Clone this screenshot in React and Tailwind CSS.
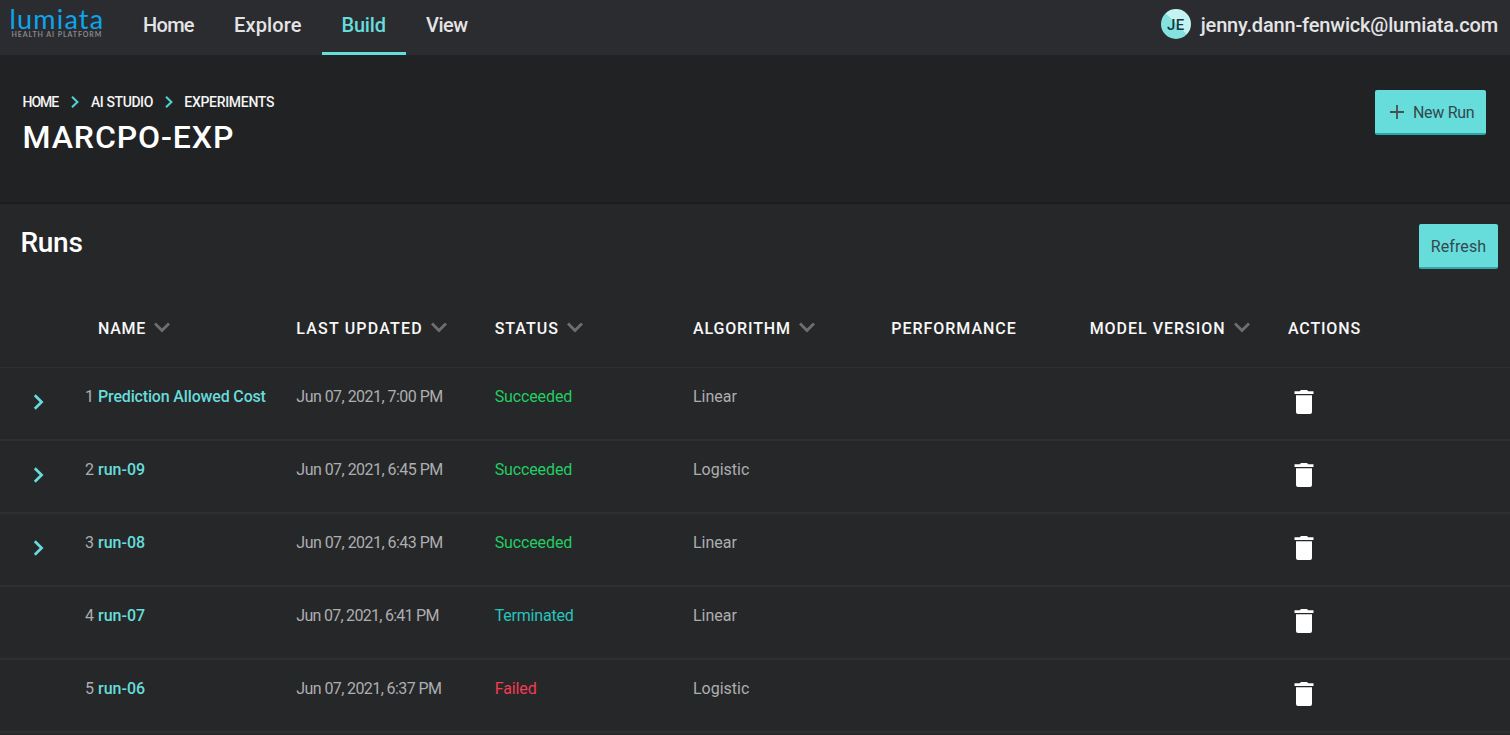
const COLUMNS = [
  { label: "NAME", spacing: "tracking-[0.7px]", sortable: true },
  { label: "LAST UPDATED", spacing: "tracking-[1.18px]", sortable: true },
  { label: "STATUS", spacing: "tracking-[1px]", sortable: true },
  { label: "ALGORITHM", spacing: "tracking-[0.85px]", sortable: true },
  { label: "PERFORMANCE", spacing: "tracking-[0.96px]", sortable: false },
  { label: "MODEL VERSION", spacing: "tracking-[0.98px]", sortable: true },
  { label: "ACTIONS", spacing: "tracking-[0.85px]", sortable: false },
];

const STATUS_STYLES = {
  Succeeded: "text-[#21ce63] tracking-[-0.12px]",
  Terminated: "text-[#25c4be] tracking-[-0.2px]",
  Failed: "text-[#f23c50] tracking-[-0.1px]",
};

const RUNS = [
  { id: 1, name: "Prediction Allowed Cost", updated: "Jun 07, 2021, 7:00 PM", status: "Succeeded", algorithm: "Linear", expandable: true },
  { id: 2, name: "run-09", updated: "Jun 07, 2021, 6:45 PM", status: "Succeeded", algorithm: "Logistic", expandable: true },
  { id: 3, name: "run-08", updated: "Jun 07, 2021, 6:43 PM", status: "Succeeded", algorithm: "Linear", expandable: true },
  { id: 4, name: "run-07", updated: "Jun 07, 2021, 6:41 PM", status: "Terminated", algorithm: "Linear", expandable: false },
  { id: 5, name: "run-06", updated: "Jun 07, 2021, 6:37 PM", status: "Failed", algorithm: "Logistic", expandable: false },
];

const DATE_SPACING = {
  4: "tracking-[-0.72px]",
  5: "tracking-[-0.6px]",
};

const GRID = "grid grid-cols-[98px_repeat(6,198.33px)_1fr]";

function SortIcon() {
  return (
    <svg className="mb-1 ml-[8.3px] h-[11px] w-4 shrink-0" viewBox="0 0 16 11" fill="none" stroke="#6d6e6f" strokeWidth="2.8">
      <path d="M1 1.4 8 8.4 15 1.4" />
    </svg>
  );
}

function ExpandIcon() {
  return (
    <svg className="h-4 w-[11px]" viewBox="0 0 11 16" fill="none" stroke="#66dcdb" strokeWidth="2.7">
      <path d="M1.8 1.2 8.6 8 1.8 14.8" />
    </svg>
  );
}

function CrumbIcon() {
  return (
    <svg className="h-3 w-2 shrink-0" viewBox="0 0 8 12" fill="none" stroke="#4fd0d0" strokeWidth="2.1">
      <path d="M1 .8 6.4 6 1 11.2" />
    </svg>
  );
}

function TrashIcon() {
  return (
    <svg className="h-6 w-5" viewBox="0 0 20 24" fill="#fff">
      <path d="M.5 1.3h5.3L7 0h6l1.2 1.3h5.3V4H.5z" />
      <path d="M2 5.3h16V22a2 2 0 0 1-2 2H4a2 2 0 0 1-2-2z" />
    </svg>
  );
}

function Header() {
  return (
    <header className="flex h-[55px] justify-between bg-[#2b2c30] pr-3">
      <div className="flex">
        <div className="flex w-[123px] flex-col pl-[9.5px] pt-[5px]">
          <span className="h-[26px] whitespace-nowrap font-['Lato',sans-serif] text-[27px] leading-[27px] tracking-[1.2px] text-[#0ea5ee]">lumiata</span>
          <span className="whitespace-nowrap pl-[2px] font-['Lato',sans-serif] text-[7px] font-bold leading-[7px] tracking-[0.92px] text-[#86878a]">HEALTH AI PLATFORM</span>
        </div>
        <nav className="flex text-xl font-medium leading-[50px] text-[#e4e4e6]">
          <a className="w-[91px] pl-5 tracking-[-0.7px]">Home</a>
          <a className="w-[108px] pl-5 tracking-[0.14px]">Explore</a>
          <a className="w-[84px] border-b-[3px] border-[#66dcdb] pl-[19.5px] tracking-[-0.2px] text-[#66dcdb]">Build</a>
          <a className="pl-5 tracking-[-0.5px]">View</a>
        </nav>
      </div>
      <div className="flex h-[49px] items-center gap-[10px]">
        <span className="mb-px flex size-[30px] items-center justify-center rounded-full bg-[linear-gradient(45deg,#84e2e0_50%,#c3f4f1_50%)] pt-0.5 text-[15px] font-medium tracking-[0.4px] text-[#17383c]">JE</span>
        <span className="pt-px text-xl font-medium tracking-[-0.17px] text-[#e4e4e6]">jenny.dann-fenwick@lumiata.com</span>
      </div>
    </header>
  );
}

function Hero() {
  return (
    <section className="flex h-[149px] justify-between border-b-2 border-[#1b1c1e] bg-[#212224] pl-[22.5px] pr-6">
      <div className="pt-[37px]">
        <div className="flex h-5 items-center text-sm font-medium text-[#f4f4f4]">
          <span className="w-[48.5px] tracking-[-1px]">HOME</span>
          <CrumbIcon />
          <span className="w-[74px] whitespace-nowrap pl-3 tracking-[-0.42px]">AI STUDIO</span>
          <span className="w-3" />
          <CrumbIcon />
          <span className="pl-[11.3px] tracking-[-0.3px]">EXPERIMENTS</span>
        </div>
        <h1 className="pt-[3px] text-[32px] font-medium leading-[44px] tracking-[0.92px] text-white">MARCPO-EXP</h1>
      </div>
      <button className="mt-[35px] flex h-[45px] w-[111px] items-center rounded-[2px] border-b-2 border-[#24a8a8] bg-[#66dcdb] pl-[15px] text-base tracking-[-0.3px] text-[#33494f]">
        <svg className="mr-[9px] h-[14px] w-[14px]" viewBox="0 0 14 14" stroke="#4c4d55" strokeWidth="1.8">
          <path d="M7 0v14M0 7h14" />
        </svg>
        <span className="whitespace-nowrap pt-0.5">New Run</span>
      </button>
    </section>
  );
}

function RunRow({ run }) {
  return (
    <div className={`${GRID} h-[73px] border-b-2 border-[#2e2f32] pt-[18px] text-base leading-[22px] text-[#adaeb0]`}>
      <div className="flex justify-between pl-[33px] pr-1">
        <span className="pt-2">{run.expandable && <ExpandIcon />}</span>
        <span>{run.id}</span>
      </div>
      <a className={`whitespace-nowrap font-medium text-[#66dcdb] ${run.id === 1 ? "tracking-[-0.16px]" : ""}`}>{run.name}</a>
      <span className={`whitespace-nowrap ${DATE_SPACING[run.id] ?? "tracking-[-0.53px]"}`}>{run.updated}</span>
      <span className={STATUS_STYLES[run.status]}>{run.status}</span>
      <span>{run.algorithm}</span>
      <span />
      <span />
      <button className="flex items-start pl-1.5 pt-1">
        <TrashIcon />
      </button>
    </div>
  );
}

export default function App() {
  return (
    <div className="h-[735px] overflow-hidden bg-[#262729] font-['Roboto',sans-serif]">
      <Header />
      <Hero />
      <main>
        <div className="flex h-[84px] justify-between pl-[20.5px] pr-3">
          <h2 className="pt-[19px] text-[28px] font-medium leading-10 tracking-[-0.3px] text-white">Runs</h2>
          <button className="mt-5 h-[45px] w-[79px] rounded-[2px] border-b-2 border-[#3aa5a8] bg-[#66dcdb] pt-0.5 text-base tracking-[0.1px] text-[#33494f]">Refresh</button>
        </div>
        <div className={`${GRID} h-20 border-b border-[#2e2f32] pt-[30px]`}>
          <span />
          {COLUMNS.map((column) => (
            <div key={column.label} className="flex h-[22px] items-center whitespace-nowrap text-base font-medium text-[#f8f8f8]">
              <span className={column.spacing}>{column.label}</span>
              {column.sortable && <SortIcon />}
            </div>
          ))}
        </div>
        {RUNS.map((run) => (
          <RunRow key={run.id} run={run} />
        ))}
      </main>
    </div>
  );
}
